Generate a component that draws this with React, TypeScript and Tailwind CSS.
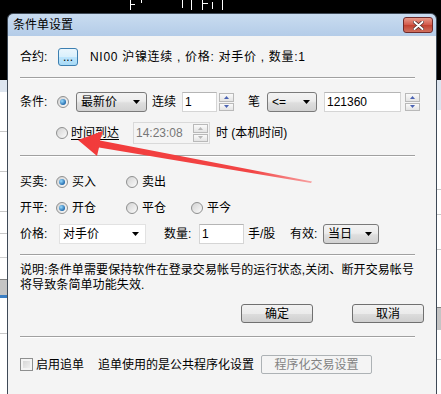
import type { ReactNode } from "react"

const font = "font-['Liberation_Sans','Noto_Sans_CJK_SC',sans-serif]"

function Radio({ checked = false }: { checked?: boolean }) {
  return (
    <span className="flex h-[12px] w-[12px] shrink-0 items-center justify-center rounded-full border border-[#8e8f8f] bg-[linear-gradient(135deg,#d2d2d2,#fbfbfb)]">
      {checked ? (
        <span className="h-[6px] w-[6px] rounded-full bg-[radial-gradient(circle_at_35%_35%,#9adcff,#1a64a8_75%)]" />
      ) : null}
    </span>
  )
}

function Caret() {
  return (
    <svg width="7" height="4" viewBox="0 0 7 4" aria-hidden="true">
      <polygon points="0,0 7,0 3.5,4" fill="#000" />
    </svg>
  )
}

function SpinButton({ up = false, disabled = false }: { up?: boolean; disabled?: boolean }) {
  return (
    <div className="flex flex-1 items-center justify-center border border-[#b9b9b9] bg-[linear-gradient(#fafafa,#e4e4e4)]">
      <svg width="5" height="3" viewBox="0 0 5 3" aria-hidden="true">
        <polygon points={up ? "0,3 5,3 2.5,0" : "0,0 5,0 2.5,3"} fill={disabled ? "#b8b8b8" : "#4b63b3"} />
      </svg>
    </div>
  )
}

function Spinner({ disabled = false }: { disabled?: boolean }) {
  return (
    <div className="flex h-[18px] w-[15px] shrink-0 flex-col gap-[1px]">
      <SpinButton up disabled={disabled} />
      <SpinButton disabled={disabled} />
    </div>
  )
}

function Combo({ children, className }: { children: ReactNode; className: string }) {
  return (
    <div
      className={`flex h-[20px] shrink-0 items-center justify-between rounded-[3px] border border-[#7a7a7a] bg-[linear-gradient(#f3f3f3,#ececec_45%,#dedede_55%,#d2d2d2)] pl-[4px] pr-[6px] ${className}`}
    >
      <span className="leading-[16px]">{children}</span>
      <Caret />
    </div>
  )
}

function Separator({ className }: { className: string }) {
  return <div className={`w-[395px] border-t border-b border-t-[#a0a0a0] border-b-white ${className}`} />
}

function Option({ label, checked = false, className }: { label: string; checked?: boolean; className: string }) {
  return (
    <div className={`flex shrink-0 items-center ${className}`}>
      <Radio checked={checked} />
      <span className="ml-[4px] leading-[16px]">{label}</span>
    </div>
  )
}

function Background() {
  return (
    <>
      <div className="absolute left-0 top-[80px] flex h-[314px] w-[7px] flex-col bg-white">
        <div className="h-[12px] bg-[#dde5ef]" />
        <div className="h-[40px] border-b border-[#c8c8c8]" />
        <div className="h-[40px] border-b border-[#c8c8c8]" />
        <div className="h-[40px] border-b border-[#c8c8c8]" />
        <div className="h-[22px] border-b border-[#c8c8c8]" />
        <div className="h-[24px] border-b border-[#d0d0d0]" />
        <div className="h-[22px] border-b border-[#808080]" />
        <div className="h-[15px] bg-[#c4c4c4]" />
        <div className="h-[3px] bg-[#3b7fc4]" />
        <div className="h-[36px] border-b border-[#c8c8c8]" />
        <div className="flex-1" />
      </div>
      <div className="absolute right-0 top-[80px] flex h-[314px] w-[4px] flex-col bg-white">
        <div className="h-[30px] bg-[#dde5ef]" />
        <div className="h-[80px] border-b border-[#c8c8c8]" />
        <div className="h-[25px] border-b border-[#c8c8c8]" />
        <div className="h-[35px] border-b border-[#c8c8c8]" />
        <div className="h-[58px] border-b border-[#808080]" />
        <div className="h-[22px] bg-[#c4c4c4]" />
        <div className="h-[30px] border-b border-[#c8c8c8]" />
        <div className="flex-1" />
      </div>
      <div className="absolute right-[4px] top-[40px] h-[354px] w-[1px] bg-[#3a9ad9]" />
      <div className="absolute left-[130px] top-0 h-[10px] w-[1px] bg-white" />
      <div className="absolute left-[130px] top-[4px] h-[1px] w-[5px] bg-white" />
      <div className="absolute left-[141px] top-0 h-[3px] w-[1px] bg-white" />
      <div className="absolute left-[182px] top-0 h-[8px] w-[1px] bg-white" />
      <div className="absolute left-[191px] top-0 h-[10px] w-[1px] bg-white" />
      <div className="absolute left-[202px] top-0 h-[10px] w-[1px] bg-white" />
      <div className="absolute left-[202px] top-[3px] h-[1px] w-[6px] bg-white" />
      <div className="absolute left-[212px] top-[2px] h-[7px] w-[1px] bg-white" />
      <div className="absolute left-[222px] top-0 h-[10px] w-[1px] bg-white" />
    </>
  )
}

function Arrow() {
  return (
    <svg className="pointer-events-none absolute left-0 top-0" width="441" height="394" aria-hidden="true">
      <defs>
        <linearGradient id="arrowFill" x1="78" y1="140" x2="312" y2="182" gradientUnits="userSpaceOnUse">
          <stop offset="0" stopColor="#f23a3a" />
          <stop offset="0.75" stopColor="#f24646" />
          <stop offset="1" stopColor="#f7a0a0" />
        </linearGradient>
      </defs>
      <polygon
        points="78,140 103,131 100,140.5 312,181.5 311,183 99,147.5 97,156"
        fill="url(#arrowFill)"
      />
    </svg>
  )
}

export default function App() {
  return (
    <div className={`relative h-[394px] w-[441px] overflow-hidden bg-black text-[12px] text-black ${font}`}>
      <Background />

      <div className="absolute left-[7px] top-[13px] flex h-[400px] w-[430px] flex-col overflow-hidden rounded-t-[6px] border border-[#3f4a57]">
        <div className="flex h-[22px] shrink-0 items-center justify-between bg-[linear-gradient(#c9dcf0,#b4cce8)] pl-[5px] pr-[3px]">
          <span className="leading-[16px]">条件单设置</span>
          <div className="flex h-[16px] w-[30px] items-center justify-center rounded-[3px] border border-[#6e2a2a] bg-[linear-gradient(#e89a8a,#d2584a_50%,#c2402f_50%,#d0705e)]">
            <svg width="11" height="9" viewBox="0 0 11 9" aria-hidden="true">
              <path d="M1.5 1 L9.5 8 M9.5 1 L1.5 8" stroke="#4a2a2a" strokeWidth="3.4" strokeLinecap="round" />
              <path d="M1.5 1 L9.5 8 M9.5 1 L1.5 8" stroke="#ffffff" strokeWidth="2" strokeLinecap="round" />
            </svg>
          </div>
        </div>

        <div className="flex flex-1 flex-col bg-[#f4f4f4] px-[12px] pt-[12px]">
          <div className="flex h-[18px] items-center">
            <span className="w-[38px] shrink-0 leading-[16px]">合约:</span>
            <div className="flex h-[18px] w-[20px] items-center justify-center rounded-[3px] border border-[#3c7fb1] bg-[linear-gradient(#eaf6fd,#d9f0fc_50%,#bee6fd_50%,#a7d9f5)] leading-[12px]">
              ...
            </div>
            <span className="ml-[12px] whitespace-nowrap leading-[16px] tracking-[0.7px]">
              NI00 沪镍连续 , 价格: 对手价 , 数量:1
            </span>
          </div>

          <Separator className="mt-[11px]" />

          <div className="mt-[13px] flex h-[20px] items-center">
            <span className="w-[37px] shrink-0 leading-[16px]">条件:</span>
            <Radio checked />
            <Combo className="ml-[7px] w-[71px]">最新价</Combo>
            <span className="ml-[5px] w-[24px] shrink-0 leading-[16px]">连续</span>
            <div className="ml-[6px] flex h-[20px] w-[35px] shrink-0 items-center border border-[#d5d5d5] border-t-[#b5b5b5] bg-white pl-[2px]">1</div>
            <div className="ml-[2px]">
              <Spinner />
            </div>
            <span className="ml-[14px] w-[12px] shrink-0 leading-[16px]">笔</span>
            <Combo className="ml-[7px] w-[50px]">&lt;=</Combo>
            <div className="ml-[7px] flex h-[20px] w-[77px] shrink-0 items-center border border-[#d5d5d5] border-t-[#b5b5b5] bg-white pl-[2px]">121360</div>
            <div className="ml-[4px]">
              <Spinner />
            </div>
          </div>

          <div className="mt-[10px] flex h-[22px] items-center">
            <div className="ml-[36px]">
              <Radio />
            </div>
            <span className="ml-[3px] w-[48px] shrink-0 leading-[16px] underline underline-offset-2">时间到达</span>
            <div className="ml-[14px] flex h-[22px] w-[77px] shrink-0 items-center justify-between border border-[#d9d9d9] bg-[#f4f4f4] pl-[2px] pr-[1px] text-[#777]">
              <span>14:23:08</span>
              <Spinner disabled />
            </div>
            <span className="ml-[6px] leading-[16px]">时 (本机时间)</span>
          </div>

          <Separator className="mt-[11px]" />

          <div className="mt-[17px] flex h-[16px] items-center">
            <span className="w-[36px] shrink-0 leading-[16px]">买卖:</span>
            <Option label="买入" checked className="w-[70px]" />
            <Option label="卖出" className="w-[65px]" />
          </div>

          <div className="mt-[10px] flex h-[16px] items-center">
            <span className="w-[36px] shrink-0 leading-[16px]">开平:</span>
            <Option label="开仓" checked className="w-[70px]" />
            <Option label="平仓" className="w-[65px]" />
            <Option label="平今" className="w-[60px]" />
          </div>

          <div className="mt-[8px] flex h-[20px] items-center">
            <span className="w-[39px] shrink-0 leading-[16px]">价格:</span>
            <div className="flex h-[20px] w-[87px] shrink-0 items-center justify-between border border-[#e2e2e2] bg-white pl-[3px] pr-[6px]">
              <span className="leading-[16px]">对手价</span>
              <Caret />
            </div>
            <span className="ml-[18px] w-[35px] shrink-0 leading-[16px]">数量:</span>
            <div className="flex h-[20px] w-[45px] shrink-0 items-center border border-[#d5d5d5] border-t-[#b5b5b5] bg-white pl-[2px]">1</div>
            <span className="ml-[4px] w-[42px] shrink-0 leading-[16px]">手/股</span>
            <span className="w-[33px] shrink-0 leading-[16px]">有效:</span>
            <Combo className="w-[56px]">当日</Combo>
          </div>

          <Separator className="mt-[10px]" />

          <p className="mt-[7px] whitespace-nowrap leading-[15px] tracking-[0.1px]">
            说明:条件单需要保持软件在登录交易帐号的运行状态,关闭、断开交易帐号
            <br />
            将导致条简单功能失效.
          </p>

          <div className="mt-[11px] flex h-[19px] w-[404px] justify-end gap-[39px]">
            {["确定", "取消"].map((label) => (
              <div
                key={label}
                className="flex h-[19px] w-[72px] items-center justify-center rounded-[3px] border border-[#707070] bg-[linear-gradient(#f2f2f2,#ebebeb_50%,#dddddd_50%,#cfcfcf)] leading-[16px]"
              >
                {label}
              </div>
            ))}
          </div>

          <Separator className="mt-[13px]" />

          <div className="mt-[17px] flex h-[19px] items-center">
            <span className="h-[13px] w-[13px] shrink-0 border border-[#8e8f8f] bg-[linear-gradient(135deg,#d0d0d0,#f6f6f6)] shadow-[inset_0_0_0_2px_#f4f4f4]" />
            <span className="ml-[3px] w-[48px] shrink-0 leading-[16px]">启用追单</span>
            <span className="ml-[14px] shrink-0 leading-[16px]">追单使用的是公共程序化设置</span>
            <div className="ml-[7px] flex h-[19px] w-[111px] shrink-0 items-center justify-center rounded-[2px] border border-[#adb2b5] bg-[#f4f4f4] leading-[16px] text-[#838383]">
              程序化交易设置
            </div>
          </div>
        </div>
      </div>

      <Arrow />
    </div>
  )
}
